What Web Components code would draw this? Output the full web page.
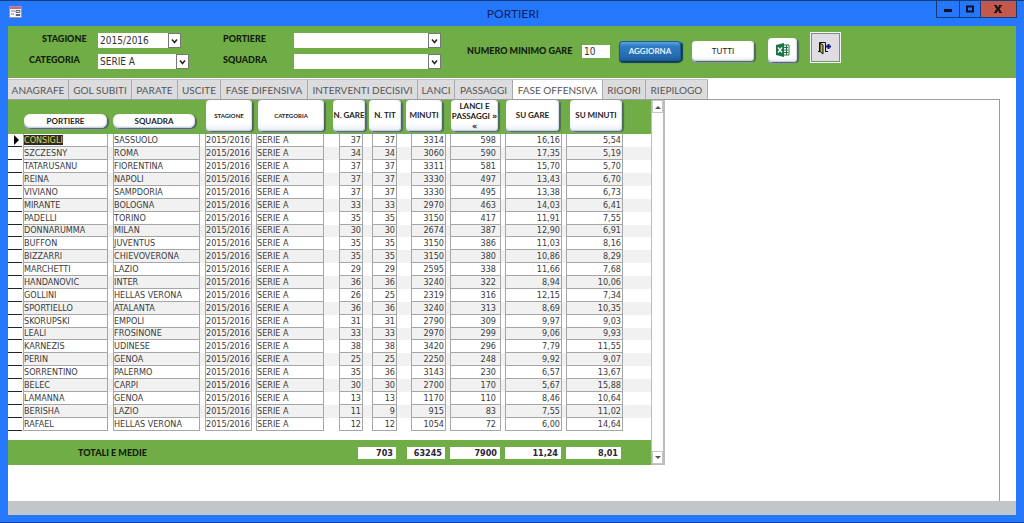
<!DOCTYPE html>
<html lang="it">
<head>
<meta charset="utf-8">
<title>PORTIERI</title>
<style>
body { margin: 0; background: #fff; font-family: Lato, "Open Sans", sans-serif; color: #222; }
</style>
</head>
<body>
<app-window heading="PORTIERI">
  <filter-bar></filter-bar>
  <page-tabs>
    <goalkeeper-sheet></goalkeeper-sheet>
  </page-tabs>
</app-window>

<script>
const define = (name, render, after) => customElements.define(name, class extends HTMLElement {
  connectedCallback() {
    if (this.shadowRoot) return;
    this.attachShadow({ mode: "open" }).innerHTML = render(this);
    if (after) after(this);
  }
});

define("app-window", el => `
<style>
:host { display: flex; flex-direction: column; min-height: 100vh; box-sizing: border-box; background: #2577fb;
  border-top: 1px solid #123f7c; border-bottom: 1px solid #123fae; padding-bottom: 7px; }
header { display: grid; grid-template-columns: 1fr auto 1fr; height: 25px; padding: 0 7px 0 9px; }
header svg { display: block; }
.icon { margin-top: 5px; }
h1 { margin: 0; font: 12px/25px Lato, sans-serif; color: #0c1f66; }
.controls { display: flex; justify-self: end; height: 17px; }
button { width: 22px; padding: 0; border: 1px solid #173b78; border-top: 0; margin-left: -1px; background: #2577fb; display: grid; place-items: center; }
.min { width: 24px; }
.close { width: 37px; background: #c4584c; }
main { flex: 1; display: flex; flex-direction: column; margin: 0 8px; background: #fff; }
footer { height: 14px; margin: 0 8px; background: #c3c6c9; }
</style>
<header>
  <svg class="icon" width="14" height="13" viewBox="0 0 14 13"><rect x=".5" y=".5" width="12" height="11" fill="#fff" stroke="#a98fa8"/><path d="M1 1h11v2H1z" fill="#d4607a"/><path d="M2 5h4M2 8h3" stroke="#6f7d96"/><path d="M7 4.500h4v2H7zM7 8.500h4v1H7z" fill="#e5e9f2" stroke="#5b6478"/></svg>
  <h1>${el.getAttribute("heading")}</h1>
  <div class="controls">
    <button class="min" aria-label="Riduci"><svg width="10" height="8"><path d="M1 4h8v3H1z" fill="#0b1026"/></svg></button>
    <button aria-label="Ingrandisci"><svg width="10" height="8"><path d="M2 1.500h6v5H2z" fill="none" stroke="#0b1026" stroke-width="2"/></svg></button>
    <button class="close" aria-label="Chiudi"><svg width="9" height="8"><path d="M1.500 1l5 6M6.500 1l-5 6" stroke="#1c0d10" stroke-width="2"/><path d="M0 .5h3M5 .5h3M0 7.500h3M5 7.500h3" stroke="#1c0d10"/></svg></button>
  </div>
</header>
<main><slot></slot></main>
<footer></footer>`);

define("combo-field", el => `
<style>
:host { display: flex; align-items: center; height: 15px; }
label { box-sizing: border-box; width: var(--label-width); padding-left: var(--indent, 0); font: 900 9px/12px Lato, sans-serif; color: #10200c; margin-bottom: 4px; }
.box { display: flex; box-sizing: border-box; width: var(--field-width); height: 15px; background: #fff; position: relative; }
select { appearance: none; flex: 1; min-width: 0; border: 0; padding: 0 14px 0 2px; margin: 0; background: none; color: #333; font: 10px/15px "DejaVu Sans Condensed", "DejaVu Sans", sans-serif; }
svg { position: absolute; right: 0; top: 0; pointer-events: none; }
</style>
<label for="f">${el.getAttribute("label")}</label>
<span class="box"><select id="f"><option>${el.getAttribute("value") || ""}</option></select>
<svg width="13" height="15"><rect x=".5" y=".5" width="12" height="14" fill="#fff" stroke="#777"/><path d="M4 6.500l2.500 3L9 6.500" fill="none" stroke="#222" stroke-width="1.500"/></svg></span>`);

define("glossy-button", el => `
<style>
:host { display: block; }
button { display: grid; place-items: center; box-sizing: border-box; width: 100%; height: 100%; padding: 0; border: 0; border-radius: var(--radius, 4px);
  background: linear-gradient(#fff, #fff 75%, #e9eef6); color: #222; font: var(--weight, normal) var(--size, 8px)/var(--line, 11px) Lato, sans-serif;
  box-shadow: inset 0 -1px 1px #c3cbdc, inset -1px 0 1px #d5dbe8, 2px 1px 1px #4d6b58, 0 2px 1px #8d9aa8; white-space: pre-line; text-align: center; }
:host([tone=blue]) button { background: linear-gradient(#6fb0e6, #2f7cc4 25%, #2569ad 80%, #1d5593); color: #e6f2ff; 
  box-shadow: inset 0 0 0 1px #1c5a98, 2px 1px 1px #0d3c4a, 0 2px 1px #0f3f68; }
</style>
<button aria-label="${el.getAttribute("label") || el.textContent.trim()}"><slot></slot></button>`);

define("filter-bar", () => `
<style>
:host { display: flex; align-items: flex-start; min-height: 52px; box-sizing: border-box; padding: 6px 0 0 21px; background: #70ad47; }
.group { display: grid; gap: 6px; margin-top: 1px; }
.first { --label-width: 69px; margin-right: 34px; }
.second { --label-width: 71px; --field-width: 147px; }
.min { display: flex; align-items: center; gap: 9px; margin: 10px 9px 0 26px; height: 18px; }
label { font: 900 9px/12px Lato, sans-serif; color: #10200c; width: 106px; white-space: nowrap; }
input { box-sizing: border-box; width: 28px; height: 13px; border: 0; padding: 0 2px; margin: 0; background: #fff; color: #333; font: 10px/13px "DejaVu Sans Condensed", "DejaVu Sans", sans-serif; }
glossy-button { width: 62px; height: 20px; margin: 9px 11px 0 0; --line: 12px; }
.excel { width: 29px; height: 24px; margin: 6px 13px 0 3px; }
.exit { display: grid; place-items: center; width: 31px; height: 31px; box-sizing: border-box; padding: 0 2px 0 0; border: 1px solid #f4f4f4; outline: 1px solid #78907a; outline-offset: -2px; background: #dfdde2; }
svg { display: block; }
</style>
<div class="group first">
  <combo-field label="STAGIONE" value="2015/2016" style="--indent:13px;--field-width:83px"></combo-field>
  <combo-field label="CATEGORIA" value="SERIE A" style="--field-width:91px"></combo-field>
</div>
<div class="group second">
  <combo-field label="PORTIERE"></combo-field>
  <combo-field label="SQUADRA"></combo-field>
</div>
<div class="min"><label for="n">NUMERO MINIMO GARE</label><input id="n" value="10"></div>
<glossy-button tone="blue" style="--weight:bold">AGGIORNA</glossy-button>
<glossy-button>TUTTI</glossy-button>
<glossy-button class="excel" label="Esporta in Excel"><svg width="14" height="14" viewBox="0 0 14 14"><path d="M7 2h6v10H7z" fill="#fff" stroke="#1f7a48"/><path d="M8 4.500h4M8 7h4M8 9.500h4M10.500 2v10" stroke="#1f7a48"/><path d="M0 2l8-2v14l-8-2z" fill="#1c7345"/><path d="M2 4.500l4 5M6 4.500l-4 5" stroke="#fff" stroke-width="1.300"/></svg></glossy-button>
<button class="exit" aria-label="Esci"><svg width="14" height="14" viewBox="0 0 14 14"><path d="M0 10.500h2M7 10.500h3M1.500 10V1.500h6V10" fill="none" stroke="#111"/><path d="M2 2l3 2v9L2 10.500z" fill="#b8b43a" stroke="#111"/><path d="M8 5.500h5M10.500 3v5" stroke="#17177c" stroke-width="2"/></svg></button>`);

const TABS = [["ANAGRAFE",61],["GOL SUBITI",63],["PARATE",46],["USCITE",43],["FASE DIFENSIVA",87],["INTERVENTI DECISIVI",110],["LANCI",37],["PASSAGGI",58],["FASE OFFENSIVA",90],["RIGORI",43],["RIEPILOGO",62]];
define("page-tabs", () => `
<style>
:host { display: flex; flex-direction: column; flex: 1; padding-right: 16px; }
nav { display: flex; height: 21px; margin-top: 1px; }
button { box-sizing: border-box; height: 21px; padding: 0; border: 0; border-right: 1px solid #a9a9ad; border-top: 1px solid #c4c4c8; background: #dcdcde; color: #555; font: 10px/19px Lato, sans-serif; white-space: nowrap; }
button[aria-selected=true] { background: #fff; }
section { flex: 1; border-top: 1px solid #9b9ba0; border-right: 1px solid #9b9ba0; margin-top: -1px; }
</style>
<nav role="tablist">${TABS.map(([t, w]) => `<button role="tab" aria-selected="${t === "FASE OFFENSIVA"}" style="width:${w}px">${t}</button>`).join("")}</nav>
<section><slot></slot></section>`);

const ROWS = `CONSIGLI|SASSUOLO|37|37|3314|598|16,16|5,54
SZCZESNY|ROMA|34|34|3060|590|17,35|5,19
TATARUSANU|FIORENTINA|37|37|3311|581|15,70|5,70
REINA|NAPOLI|37|37|3330|497|13,43|6,70
VIVIANO|SAMPDORIA|37|37|3330|495|13,38|6,73
MIRANTE|BOLOGNA|33|33|2970|463|14,03|6,41
PADELLI|TORINO|35|35|3150|417|11,91|7,55
DONNARUMMA|MILAN|30|30|2674|387|12,90|6,91
BUFFON|JUVENTUS|35|35|3150|386|11,03|8,16
BIZZARRI|CHIEVOVERONA|35|35|3150|380|10,86|8,29
MARCHETTI|LAZIO|29|29|2595|338|11,66|7,68
HANDANOVIC|INTER|36|36|3240|322|8,94|10,06
GOLLINI|HELLAS VERONA|26|25|2319|316|12,15|7,34
SPORTIELLO|ATALANTA|36|36|3240|313|8,69|10,35
SKORUPSKI|EMPOLI|31|31|2790|309|9,97|9,03
LEALI|FROSINONE|33|33|2970|299|9,06|9,93
KARNEZIS|UDINESE|38|38|3420|296|7,79|11,55
PERIN|GENOA|25|25|2250|248|9,92|9,07
SORRENTINO|PALERMO|35|36|3143|230|6,57|13,67
BELEC|CARPI|30|30|2700|170|5,67|15,88
LAMANNA|GENOA|13|13|1170|110|8,46|10,64
BERISHA|LAZIO|11|9|915|83|7,55|11,02
RAFAEL|HELLAS VERONA|12|12|1054|72|6,00|14,64`.split("\n").map(line => {
  const [name, team, ...nums] = line.split("|");
  return [name, team, "2015/2016", "SERIE A", ...nums];
});
/* column width, then width of the box inside it */
const COLUMNS = [[90,85],[92,87],[51,47],[83,68],[33,24],[39,25],[39,35],[55,51],[61,57],[57,57]];

define("goalkeeper-sheet", () => `
<style>
:host { display: grid; grid-template-columns: 643px 14px; width: max-content; }
.head { display: flex; height: 34px; background: #70ad47; box-sizing: border-box; padding-left: 16px; --weight: bold; }
glossy-button { height: 31px; margin-right: 4px; flex: none; }
.low { height: 14px; margin-top: 14px; --radius: 6px; --line: 14px; }
.small { --size: 6px; }
.quote { font: bold 9px/10px "DejaVu Sans Condensed", "DejaVu Sans", sans-serif; }
table { table-layout: fixed; border-collapse: collapse; width: 643px; font: 9px/12px "DejaVu Sans Condensed", "DejaVu Sans", sans-serif; color: #3a3a3a; }
tr { height: 13px; }
tr:nth-child(8n) { height: 12px; }
tr:nth-child(8n) .cell, tr:nth-child(8n) .rec { height: 12px; line-height: 11px; }
tbody tr:nth-child(even) { background: #f1f1f1; }
td { padding: 0; }
.rec { box-sizing: border-box; height: 13px; width: 14px; border-bottom: 1px solid #222; background: #fff; }
.rec svg { display: block; margin-left: 6px; }
.cell { box-sizing: border-box; height: 13px; border: solid #a6a6a6; border-width: 0 1px 1px; padding-left: 0; white-space: nowrap; }
.num { text-align: right; padding-right: 1px; }
.c7 { padding-right: 4px; }
mark { background: #2b2b2b; color: #e3d84d; }
.foot { display: flex; align-items: center; height: 25px; margin-top: 9px; padding-left: 70px; background: #70ad47; font: 900 9px/12px Lato, sans-serif; color: #10200c; }
.foot b { width: 280px; font-weight: 900; }
output { box-sizing: border-box; height: 12px; padding-right: 3px; margin-right: 5px; background: #fff; color: #2c2438; text-align: right; font: bold 9px/12px "DejaVu Sans Condensed", "DejaVu Sans", sans-serif; }
.bar { display: flex; flex-direction: column; justify-content: space-between; box-sizing: border-box; border: solid #bcbcc0; border-width: 0 2px 1px 1px; background: #fdfdfd; }
.bar button { display: grid; place-items: center; height: 13px; padding: 0; border: 1px solid #c6c6c8; background: #fff; }
</style>
<div>
  <div class="head">
    <glossy-button class="low" style="width:83px;margin-right:6px">PORTIERE</glossy-button>
    <glossy-button class="low" style="width:82px;margin-right:11px">SQUADRA</glossy-button>
    <glossy-button class="small" style="width:46px;margin-right:6px">STAGIONE</glossy-button>
    <glossy-button class="small" style="width:66px;margin-right:9px">CATEGORIA</glossy-button>
    <glossy-button style="width:32px">N. GARE</glossy-button>
    <glossy-button style="width:32px;margin-right:5px">N. TIT</glossy-button>
    <glossy-button style="width:36px;margin-right:9px">MINUTI</glossy-button>
    <glossy-button style="width:47px;margin-right:8px;--line:10px" label="LANCI E PASSAGGI"><span>LANCI E
PASSAGGI <span class="quote">»</span>
<span class="quote">«</span></span></glossy-button>
    <glossy-button style="width:53px;margin-right:11px">SU GARE</glossy-button>
    <glossy-button style="width:52px">SU MINUTI</glossy-button>
  </div>
  <table aria-label="Fase offensiva">
    <colgroup><col style="width:15px">${COLUMNS.map(c => `<col style="width:${c[0]}px">`).join("")}<col></colgroup>
    <tbody>${ROWS.map((r, i) => `<tr><td><div class="rec">${i ? "" : '<svg width="6" height="12"><path d="M0 1l5 5-5 5z" fill="#000"/></svg>'}</div></td>${r.map((v, c) =>
      `<td><div class="cell ${c > 3 ? "num" : ""} ${c === 2 ? "num" : ""} c${c}" style="width:${COLUMNS[c][1]}px">${!i && !c ? `<mark>${v}</mark>` : v}</div></td>`).join("")}<td></td></tr>`).join("")}</tbody>
  </table>
  <div class="foot"><b>TOTALI E MEDIE</b>
    <output style="width:38px;margin-right:11px">703</output><output style="width:38px">63245</output><output style="width:50px">7900</output><output style="width:56px">11,24</output><output style="width:55px">8,01</output>
  </div>
</div>
<div class="bar"><button aria-label="Su"><svg width="6" height="4"><path d="M0 4l3-3 3 3z" fill="#555"/></svg></button><button aria-label="Giù"><svg width="6" height="4"><path d="M0 0l3 3 3-3z" fill="#555"/></svg></button></div>`);
</script>
</body>
</html>
